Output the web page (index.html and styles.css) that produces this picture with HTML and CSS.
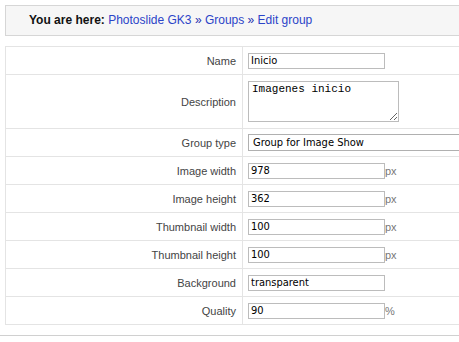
FILE: index.html
```html
<!DOCTYPE html>
<html lang="en">
<head>
    <meta charset="UTF-8">
    <title>Edit group</title>
    <link rel="stylesheet" href="styles.css">
</head>
<body>
    <div class="page">
        <div class="breadcrumb">
            <strong>You are here:</strong>
            <a href="#">Photoslide GK3</a> &raquo; <a href="#">Groups</a> &raquo; <a href="#">Edit group</a>
        </div>

        <table class="form_table">
            <tr>
                <td class="label">Name</td>
                <td class="field"><input class="text_input" type="text" value="Inicio"></td>
            </tr>
            <tr class="tall">
                <td class="label">Description</td>
                <td class="field"><textarea class="text_area">Imagenes inicio</textarea></td>
            </tr>
            <tr>
                <td class="label">Group type</td>
                <td class="field">
                    <select class="select_input">
                        <option>Group for Image Show</option>
                    </select>
                </td>
            </tr>
            <tr>
                <td class="label">Image width</td>
                <td class="field"><input class="text_input" type="text" value="978"><span class="unit">px</span></td>
            </tr>
            <tr>
                <td class="label">Image height</td>
                <td class="field"><input class="text_input" type="text" value="362"><span class="unit">px</span></td>
            </tr>
            <tr>
                <td class="label">Thumbnail width</td>
                <td class="field"><input class="text_input" type="text" value="100"><span class="unit">px</span></td>
            </tr>
            <tr>
                <td class="label">Thumbnail height</td>
                <td class="field"><input class="text_input" type="text" value="100"><span class="unit">px</span></td>
            </tr>
            <tr>
                <td class="label">Background</td>
                <td class="field"><input class="text_input" type="text" value="transparent"></td>
            </tr>
            <tr>
                <td class="label">Quality</td>
                <td class="field"><input class="text_input" type="text" value="90"><span class="unit">%</span></td>
            </tr>
        </table>

        <div class="footer_line"></div>
    </div>
</body>
</html>
```

FILE: styles.css
```css
body {
    margin: 0;
    background: #fff;
    font-family: "Liberation Sans", Arial, sans-serif;
    font-size: 11px;
    color: #333;
    overflow: hidden;
}
.page {
    width: 480px;
}

.breadcrumb {
    margin: 5px 0 0 5px;
    height: 29px;
    line-height: 29px;
    padding-left: 23px;
    background: #f6f6f6;
    border: 1px solid #d6d6d6;
    border-right: none;
    font-size: 12px;
    color: #1d2fb0;
}
.breadcrumb strong {
    color: #111;
}
.breadcrumb a {
    color: #2b44c8;
    text-decoration: none;
}

.form_table {
    margin: 10px 0 0 5px;
    width: 475px;
    border-collapse: collapse;
    border: 1px solid #e4e4e4;
    border-right: none;
}
.form_table td {
    border-top: 1px solid #e4e4e4;
    height: 27px;
    padding: 0;
    vertical-align: middle;
}
.form_table .tall td {
    height: 53px;
}
.label {
    width: 224px;
    padding: 0 6px !important;
    text-align: right;
    border-right: 1px solid #e4e4e4;
    color: #444;
}
.field {
    padding-left: 5px !important;
}

.text_input {
    box-sizing: border-box;
    width: 137px;
    height: 16px;
    margin: 0;
    padding: 0 2px;
    border: 1px solid #bcbcbc;
    font-family: "DejaVu Sans Condensed", "DejaVu Sans", sans-serif;
    font-size: 11px;
    color: #000;
    vertical-align: middle;
    outline: none;
}
.text_area {
    box-sizing: border-box;
    display: block;
    width: 151px;
    height: 41px;
    margin: 0;
    padding: 1px 3px;
    border: 1px solid #bcbcbc;
    font-family: "Liberation Mono", "Courier New", monospace;
    font-size: 11px;
    color: #000;
    outline: none;
}
.select_input {
    box-sizing: border-box;
    -webkit-appearance: none;
    appearance: none;
    width: 230px;
    height: 17px;
    margin: 0;
    padding: 0 4px;
    border: 1px solid #b0b0b0;
    border-radius: 0;
    background: #fff;
    font-family: "DejaVu Sans Condensed", "DejaVu Sans", sans-serif;
    font-size: 11px;
    color: #000;
    vertical-align: middle;
}
.unit {
    color: #777;
    vertical-align: middle;
    font-size: 11px;
}

.footer_line {
    margin-top: 10px;
    border-top: 1px solid #d0d0d0;
}
```
